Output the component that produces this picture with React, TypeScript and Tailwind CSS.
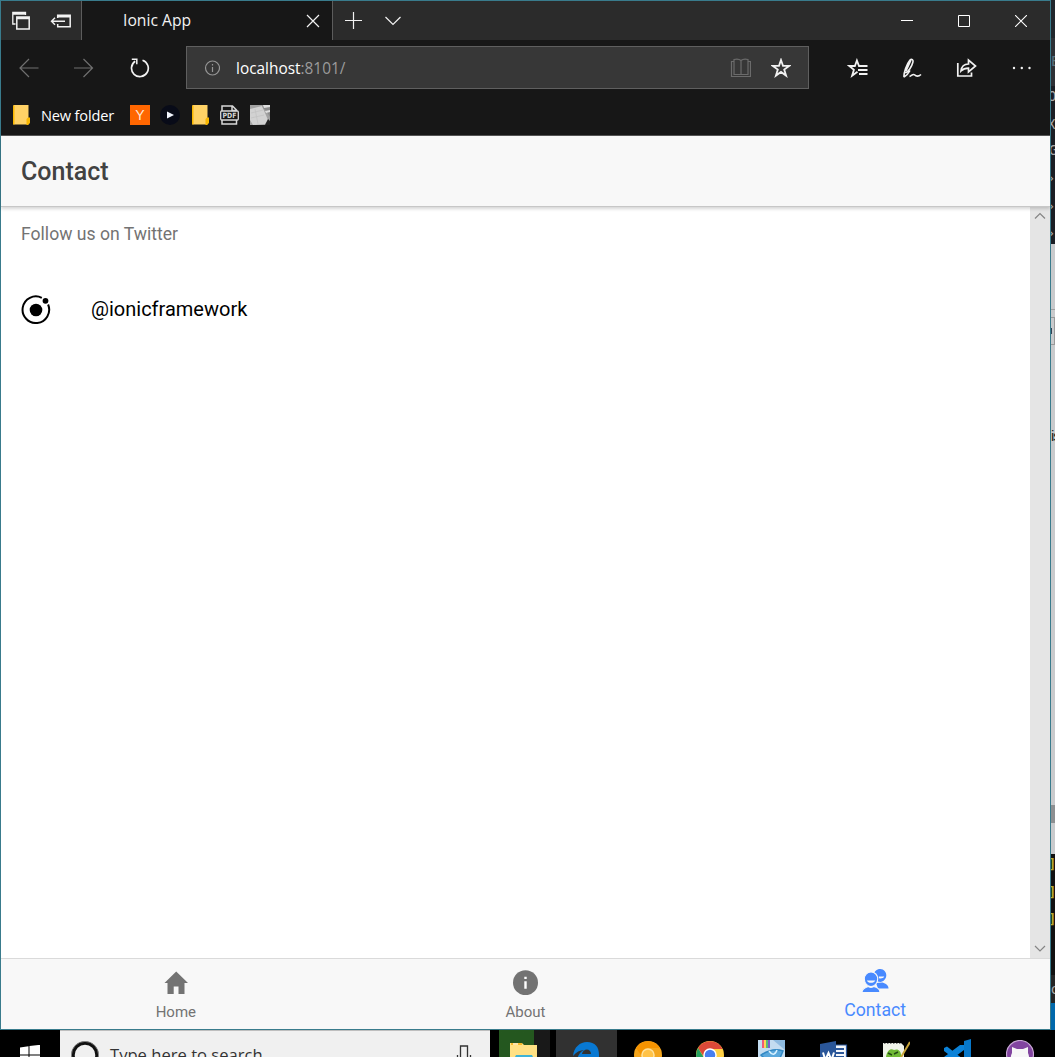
import React from "react";

type IconProps = { w: number; h: number; className?: string; children: React.ReactNode };

function Icon({ w, h, className = "", children }: IconProps) {
  return (
    <svg width={w} height={h} viewBox={`0 0 ${w} ${h}`} fill="none" stroke="currentColor" strokeWidth="1.2" className={`block shrink-0 ${className}`}>
      {children}
    </svg>
  );
}

function TabStrip() {
  return (
    <div className="flex h-[39px] shrink-0 bg-[#2b2b2b] text-[#f2f2f2]">
      <div className="flex w-[81px] shrink-0 items-center border-r border-[#5c5c5c] pl-[10px]">
        <Icon w={20} h={20}>
          <path d="M4.5 13H1.8V1.5H14.5V4M1.8 3H14.5" strokeWidth="1.3" />
          <path d="M5.8 6H18.2V18H5.8ZM5.8 7.500H18" strokeWidth="1.5" />
        </Icon>
        <Icon w={22} h={20} className="ml-[19px]">
          <path d="M7.7 7V4.2H20.2V15.8H7.7V13M8 5.800H20" strokeWidth="1.5" />
          <path d="M15 10.2H1.5M5 6.7L1.5 10.2L5 13.7" strokeWidth="1.4" />
        </Icon>
      </div>
      <div className="flex w-[251px] shrink-0 items-center border-r border-[#5c5c5c] bg-[#171717] pl-[41px]">
        <span className="w-[183px] whitespace-nowrap pt-px font-['Open_Sans',sans-serif] text-[15.7px] leading-none">Ionic App</span>
        <Icon w={14} h={14}>
          <path d="M1 1L13 13M13 1L1 13" />
        </Icon>
      </div>
      <div className="flex items-center">
        <Icon w={18} h={18} className="ml-[11px]">
          <path d="M1 8.500H18M9.500 0V17" />
        </Icon>
        <Icon w={18} h={12} className="ml-[22px]">
          <path d="M1.5 2L9 9.500L16.5 2" />
        </Icon>
      </div>
      <div className="ml-auto flex text-white">
        <div className="flex w-[57px] items-center justify-center">
          <Icon w={12} h={12}><path d="M0 5.5H12" strokeWidth="1" /></Icon>
        </div>
        <div className="flex w-[57px] items-center justify-center pl-px">
          <Icon w={12} h={12}><path d="M0.5 0.5H11.500V11.5H0.5Z" strokeWidth="1" /></Icon>
        </div>
        <div className="flex w-[58px] items-center justify-center">
          <Icon w={12} h={12}><path d="M0 0L12 12M12 0L0 12" strokeWidth="1.1" /></Icon>
        </div>
      </div>
    </div>
  );
}

function Toolbar() {
  return (
    <div className="flex h-[55px] shrink-0 items-center text-[#f2f2f2]">
      <Icon w={20} h={20} className="ml-[18px] text-[#707070]">
        <path d="M19.500 10H1.500M10 1L1 10L10 19" />
      </Icon>
      <Icon w={20} h={20} className="ml-[35px] text-[#707070]">
        <path d="M0 10H18.500M9.500 1L18.500 10L9.500 19" />
      </Icon>
      <Icon w={20} h={20} className="ml-[36px]">
        <path d="M12.500 2.200A8.400 8.400 0 1 1 5.200 3.200" strokeWidth="1.7" />
        <path d="M1.800 1.300H6.800V6.300" strokeWidth="1.5" />
      </Icon>
      <div className="ml-[36px] flex h-[43px] w-[623px] shrink-0 items-center border border-[#5f5f5f] bg-[#373737]">
        <Icon w={16} h={16} className="ml-[17px] text-[#969696]">
          <circle cx="8.500" cy="8" r="7" />
          <path d="M8.500 4V5.5M8.500 7V12" />
        </Icon>
        <span className="ml-[16px] whitespace-nowrap pt-[2px] font-['Open_Sans',sans-serif] text-[15.4px] leading-none text-white">
          localhost<span className="text-[#9b9b9b]">:8101/</span>
        </span>
        <Icon w={21} h={20} className="ml-auto text-[#6b6b6b]">
          <path d="M11 2.500C9 0.8 6.500 0.8 4 1.5V16.5H18V1.5C15.500 0.8 13 0.8 11 2.5V16.5M4 3.5H1.500V18.5H20.500V3.5H18" />
        </Icon>
        <Icon w={20} h={20} className="mr-[17px] ml-[20px]">
          <path d="M10 2L12 7.900H18.200L13.200 11.500L15.100 17.600L10 13.900L4.900 17.600L6.800 11.500L1.800 7.900H8Z" strokeWidth="1.8" />
        </Icon>
      </div>
      <Icon w={21} h={20} className="ml-[38px]">
        <path d="M20.500 8H12L9.900 2.500L7.900 8H2.300L6.900 11.700L5.100 17.700L10.500 13.800M11 12H20.500M12 16H20.500" strokeWidth="1.8" />
      </Icon>
      <Icon w={20} h={20} className="ml-[34px]">
        <path d="M2 19C1.500 16 4.500 6 8 2C9.500 0.500 11.700 1.500 10.800 4.500C9.800 8.500 6.500 13.500 3.500 15M2 19C4.500 17.500 6.500 15.500 8 12.500M9 2L4 13M7.500 18.500C9.500 17.800 11 15.500 12.500 16.800C14 18.500 16.500 18.800 19 16.500" strokeWidth="1.6" />
      </Icon>
      <Icon w={21} h={20} className="ml-[34px]">
        <path d="M1.8 5V18H15.5V14.500" strokeWidth="1.7" />
        <path d="M5 13C5.5 8.5 8 6 12.500 6V2L19.5 8L12.500 14V10.2C9.5 10.2 7 11 5 13Z" strokeWidth="1.7" />
      </Icon>
      <Icon w={20} h={4} className="ml-[35px]">
        <circle cx="2" cy="2" r="1.200" fill="currentColor" stroke="none" />
        <circle cx="9.800" cy="2" r="1.200" fill="currentColor" stroke="none" />
        <circle cx="17.500" cy="2" r="1.200" fill="currentColor" stroke="none" />
      </Icon>
    </div>
  );
}

function Folder({ className = "" }: { className?: string }) {
  return (
    <Icon w={17} h={20} className={className}>
      <path d="M0.5 0H15.5V19.5H0.5Z" fill="#ffd266" stroke="none" />
      <path d="M0 0.5H1.5V19.5H0ZM13.500 14L15 12.500H17V18L15 20H13.500Z" fill="#f9b700" stroke="none" />
    </Icon>
  );
}

function FavoritesBar() {
  return (
    <div className="flex h-[41px] shrink-0 items-center border-b border-[#555] text-white">
      <Folder className="ml-[12px]" />
      <span className="ml-[11px] w-[73px] whitespace-nowrap pt-px font-['Open_Sans',sans-serif] text-[14.6px] leading-none tracking-[-0.17px]">New folder</span>
      <span className="ml-[16px] flex h-5 w-5 items-center justify-center bg-[#ff6600] font-['Liberation_Sans',sans-serif] text-[14px] leading-none text-[#ffe9d9]">Y</span>
      <span className="ml-[10px] flex h-5 w-5 items-center justify-center rounded-full bg-[#080b18]">
        <Icon w={7} h={8}><path d="M0 0.5L7 4L0 7.5Z" fill="#f1f5ff" stroke="none" /></Icon>
      </span>
      <Folder className="ml-[12px]" />
      <Icon w={20} h={20} className="ml-[11px] text-[#d7d7d7]">
        <path d="M2 6V1H12.500L16.500 5V6M12 1V5.5H16.500M2 15V19H16.500V15" strokeWidth="1.5" />
        <rect x="0.7" y="6" width="17.600" height="9" rx="1" strokeWidth="1.3" />
        <text x="9.500" y="13.3" textAnchor="middle" fontFamily="DejaVu Sans" fontWeight="bold" fontSize="7.2" textLength="14" lengthAdjust="spacingAndGlyphs" fill="currentColor" stroke="none">PDF</text>
      </Icon>
      <Icon w={20} h={20} className="ml-[10px]">
        <path d="M0 0H20V20H0Z" fill="#a2a2a2" stroke="none" />
        <path d="M0 4L12 1L18 15L15 19L3 20L0 15Z" fill="#d2d2d2" stroke="none" />
        <path d="M12 0H20V12L17 7L13 3Z" fill="#8b8b8b" stroke="none" />
        <path d="M13 0L20 0V2L14 3ZM15 6L20 5V7L16 8Z" fill="#dedede" stroke="none" />
        <path d="M18 14L20 16V20H15Z" fill="#202020" stroke="none" />
        <path d="M1 8L13 5M1 13L14 10M5 4L8 19" stroke="#c3c3c3" strokeWidth="0.800" />
      </Icon>
    </div>
  );
}

function Content() {
  return (
    <div className="flex min-h-0 flex-1 bg-white font-[Roboto,sans-serif]">
      <div className="flex-1 pl-[20px]">
        <div className="mt-[17px] text-[17.6px] leading-[20px] text-[#737373]">Follow us on Twitter</div>
        <div className="mt-[50px] flex h-[30px] items-center text-black">
          <Icon w={30} h={30}>
            <circle cx="15" cy="16" r="6.3" fill="currentColor" stroke="none" />
            <circle cx="24.500" cy="6.800" r="2.900" fill="currentColor" stroke="none" />
            <path d="M20.800 3.800A13.300 13.300 0 1 0 27.100 10.500" strokeWidth="2" />
          </Icon>
          <span className="ml-[40px] text-[20px] leading-none">@ionicframework</span>
        </div>
      </div>
      <div className="flex w-[20px] flex-col items-center justify-between bg-[#e5e5e5] pt-[5px] pb-[5px] text-[#858585]">
        <Icon w={12} h={8}><path d="M1 6.500L6 1.500L11 6.500" /></Icon>
        <Icon w={12} h={8}><path d="M1 1L6 6L11 1" /></Icon>
      </div>
    </div>
  );
}

function AppTabs() {
  return (
    <div className="grid h-[71px] shrink-0 grid-cols-3 border-t border-[#dadada] bg-[#f8f8f8] font-[Roboto,sans-serif] text-[#737373]">
      <div className="flex flex-col items-center pt-[12px]">
        <Icon w={24} h={23}>
          <path d="M9.700 23V15.5H14.500V23H20.5V12H24L12.2 0.5L0.5 12H3.500V23Z" fill="currentColor" stroke="none" />
        </Icon>
        <span className="mt-[9px] text-[15px] leading-[18px]">Home</span>
      </div>
      <div className="flex flex-col items-center pt-[11px]">
        <Icon w={25} h={25}>
          <circle cx="12.5" cy="12.7" r="12.5" fill="currentColor" stroke="none" />
          <path d="M11.3 6.7H13.7V9H11.3ZM11.3 11.3H13.7V18.7H11.3Z" fill="white" stroke="none" />
        </Icon>
        <span className="mt-[8px] text-[15px] leading-[18px]">About</span>
      </div>
      <div className="flex flex-col items-center pt-[10px] text-[#488aff]">
        <Icon w={27} h={24}>
          <path d="M18.3 0C14.5 0 12 2.5 12 6S15 13 18.3 13S24.300 9.5 24.300 6.3S22 0 18.3 0ZM16 19.5H26.5C26.5 16 24 14.8 20.5 13.5L14 14Z" fill="currentColor" stroke="none" />
          <path d="M9 3C5 3 2.300 6 2.300 10C2.300 14 5.5 17.500 9 17.500S15.700 14 15.700 10S13 3 9 3ZM0 23.500C0 20 2.5 18.500 6.500 17.500C8 18.5 10 18.5 11.5 17.5C16 18.5 18 20 18 23.500Z" fill="currentColor" stroke="#f8f8f8" strokeWidth="1.1" />
          <path d="M4.800 11.500H13.300C12.500 13.200 11 13.800 9 13.800S5.600 13.200 4.800 11.500ZM16.800 7.500H22.300C21.500 8.900 20.300 9.400 18.500 9.400L16.800 9.300Z" fill="#f8f8f8" stroke="none" />
        </Icon>
        <span className="mt-[7px] text-[17.7px] leading-[21px]">Contact</span>
      </div>
    </div>
  );
}

function Desktop() {
  return (
    <div className="flex h-[1030px] w-[4px] flex-col overflow-hidden bg-[#c9cacc] text-[14px] leading-none text-[#aaa]">
      <div className="h-[38px] shrink-0 bg-[#20262c]" />
      <div className="h-[206px] shrink-0 bg-[#1b1e24] font-['DejaVu_Sans_Mono',monospace]">
        <div className="h-[48px] bg-[#2d3035] pt-[16px] text-[#57717d]">E</div>
        <div className="-ml-[3px] h-[29px] pt-[3px]">O</div>
        <div className="-ml-[4px] h-[28px] pt-[2px]">X</div>
        <div className="-ml-[2px] h-[28px]">G</div>
        <div className="-ml-[4px] h-[28px]">›</div>
        <div className="-ml-[4px] h-[27px]">›</div>
        <div className="-ml-[4px]">›</div>
      </div>
      <div className="h-[66px] shrink-0 border-b border-[#a0a0a0]" />
      <div className="mt-[7px] flex h-[28px] shrink-0 items-center border-y border-r border-[#999]">
        <div className="h-[6px] w-[1px] bg-[#345]" />
      </div>
      <div className="mt-[83px] h-[17px] shrink-0 whitespace-nowrap font-['Liberation_Sans',sans-serif] text-[15px] tracking-[-1px] text-[#222]">is</div>
      <div className="mt-[360px] h-[18px] shrink-0 bg-[#8d8f91]" />
      <div className="mt-[31px] h-[122px] shrink-0 bg-[#111] font-['DejaVu_Sans_Mono',monospace] font-bold text-[#b5a82d]">
        <div className="-ml-[3px] h-[28px] pt-[3px]">]</div>
        <div className="-ml-[3px] h-[27px] pt-[3px]">]</div>
        <div className="-ml-[3px] h-[67px] pt-[3px]">]</div>
      </div>
      <div className="-mt-[1px] h-[28px] shrink-0 bg-[#242424] pt-[7px]">o</div>
      <div className="flex-1 bg-[#0068ab]" />
    </div>
  );
}

function Taskbar() {
  return (
    <div className="flex h-[27px] overflow-hidden bg-black">
      <div className="w-[60px] pt-[15px] pl-[20px]">
        <Icon w={20} h={20}>
          <path d="M0 2.500L8.500 1.300V9.500H0ZM9.500 1.100L20 -0.200V9.500H9.500ZM0 10.500H8.500V18.500L0 17.300ZM9.500 10.500H20V20L9.500 18.700Z" fill="white" stroke="none" />
        </Icon>
      </div>
      <div className="flex w-[430px] border-t border-[#bebebe] bg-[#f0f0f0] text-[#333]">
        <Icon w={28} h={28} className="mt-[10px] ml-[11px]">
          <circle cx="14" cy="14" r="12" strokeWidth="3.5" stroke="#111" />
          <circle cx="14" cy="14" r="13.6" strokeWidth="0.7" stroke="#999" />
        </Icon>
        <span className="mt-[13px] ml-[11px] whitespace-nowrap font-['Open_Sans',sans-serif] text-[16.6px] leading-[22px]">Type here to search</span>
        <Icon w={16} h={22} className="mt-[14px] mr-[18px] ml-auto">
          <path d="M4.5 18V1H11.5V18ZM1.5 10V16M14.5 10V16" strokeWidth="1.3" />
        </Icon>
      </div>
      <div className="ml-[9px] flex w-[51px] bg-gradient-to-r from-[#24571f] from-[69%] to-[#191919] to-[69%]">
        <Icon w={28} h={20} className="mt-[12px] ml-[11px]">
          <path d="M0 1H12L14 3H27V20H0Z" fill="#ffe184" stroke="none" />
          <path d="M1 1H12V3H1Z" fill="#f6b928" stroke="none" />
          <path d="M3 2H8" stroke="white" />
          <path d="M5 15L6 13H22L23 15V20H5Z" fill="#3eb3d6" stroke="none" />
        </Icon>
      </div>
      <div className="ml-[6px] w-[61px] bg-[#313131]">
        <Icon w={27} h={24} className="mt-[12px] ml-[17px]">
          <path d="M0 14C1 5 7 0 14 0C22 0 26 5 26 13V16H9C10 20 14 22 20 20V24H5C3 20 4 11 11 8C7 8 3 10 0 14ZM9 12H18C18 6 10 6 9 12Z" fill="#0878d2" stroke="none" />
        </Icon>
      </div>
      <Icon w={28} h={28} className="mt-[11px] ml-[17px]">
        <circle cx="14" cy="14" r="14" fill="#f4a51c" stroke="none" />
        <path d="M2 7A14 14 0 0 1 26 7H14A7 7 0 0 0 7 14Z" fill="#f59300" stroke="none" />
        <circle cx="14" cy="14" r="6" fill="#ffc247" stroke="#ffe19b" strokeWidth="1.5" />
      </Icon>
      <Icon w={28} h={28} className="mt-[11px] ml-[34px]">
        <circle cx="14" cy="14" r="14" fill="#ffd044" stroke="none" />
        <path d="M2 7A14 14 0 0 1 26.5 8H14A7 7 0 0 0 8 16Z" fill="#dc4938" stroke="none" />
        <path d="M2 7L10 20L14 28A14 14 0 0 1 2 7Z" fill="#25a160" stroke="none" />
        <circle cx="14" cy="14" r="6" fill="#467ff0" stroke="white" strokeWidth="1.5" />
      </Icon>
      <Icon w={28} h={26} className="mt-[10px] ml-[34px]">
        <path d="M0 0H27V26H0Z" fill="#c3dcf0" stroke="none" />
        <path d="M15 0H27V10Z" fill="#8fbbe0" stroke="none" />
        <path d="M4 0H6V8H4Z" fill="#ee5a7a" stroke="none" />
        <path d="M6 0H8V8H6Z" fill="#ffd455" stroke="none" />
        <path d="M8 0H10V8H8Z" fill="#59bb76" stroke="none" />
        <path d="M10 0H12V8H10Z" fill="#7960cc" stroke="none" />
        <path d="M3 15Q15 7 25 11L22 18H6Z" fill="#5aa8dc" stroke="#3188c4" strokeWidth="1.500" />
        <path d="M11 11Q16 18 19 10" stroke="#d8f1ff" strokeWidth="1.500" />
      </Icon>
      <Icon w={28} h={26} className="mt-[11px] ml-[34px]">
        <path d="M12 4H26.500V26H12Z" fill="#f5f7fb" stroke="#2a5699" />
        <path d="M16 8H24M16 12H24M16 16H24" stroke="#2a5699" strokeWidth="2" />
        <path d="M0 3L16 0V26H0Z" fill="#2a5699" stroke="none" />
        <path d="M3 11.500L5.300 19L8.500 12L11.500 19L14 11.500" stroke="white" strokeWidth="2" />
      </Icon>
      <Icon w={28} h={26} className="mt-[10px] ml-[34px]">
        <path d="M1 3H19L22 6V26H1Z" fill="#f0f3e9" stroke="none" />
        <path d="M2 3.500H19" stroke="#777" strokeDasharray="1.5 1.5" />
        <path d="M4 17C5 10 9 8 12 10C16 8 20 11 19 18H4Z" fill="#70b935" stroke="none" />
        <path d="M6 13L10 15M12 14L16 12" stroke="#214913" strokeWidth="1.500" />
        <path d="M28 2L18 19" stroke="#c8a439" strokeWidth="2" />
      </Icon>
      <Icon w={28} h={26} className="mt-[9px] ml-[34px]">
        <path d="M20 2L27 0V26H20Z" fill="#0878ca" stroke="none" />
        <path d="M0 9L3 7.500L19 20V24H16L0 12ZM16 6H20V11L4 23L0 21V18Z" fill="#0b82d8" stroke="none" />
      </Icon>
      <Icon w={28} h={28} className="mt-[10px] ml-[34px]">
        <circle cx="14" cy="14" r="13.500" fill="#8245a0" stroke="#c8a8d5" />
        <path d="M6 7L11 9H17L22 7V13C25 20 21 24 17 24V28H11V24C6 24 3 19 6 13Z" fill="#f7f7f7" stroke="none" />
      </Icon>
    </div>
  );
}

export default function App() {
  return (
    <div className="h-[1057px] w-[1055px] overflow-hidden bg-black">
      <div className="flex h-[1030px]">
        <div className="flex w-[1051px] shrink-0 flex-col border border-[#397b8c] bg-[#171717]">
          <TabStrip />
          <Toolbar />
          <FavoritesBar />
          <header className="relative flex h-[71px] shrink-0 items-center border-b border-[#c7c7c7] bg-[#f8f8f8] pt-[2px] pl-[20px] font-[Roboto,sans-serif] text-[25px] font-medium text-[#424242] shadow-[0_2px_3px_rgba(0,0,0,0.16)]">
            Contact
          </header>
          <Content />
          <AppTabs />
        </div>
        <Desktop />
      </div>
      <Taskbar />
    </div>
  );
}
